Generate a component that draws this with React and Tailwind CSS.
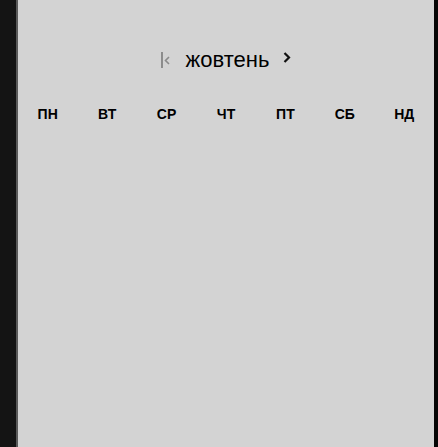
export default function App() {
  const days = ["ПН", "ВТ", "СР", "ЧТ", "ПТ", "СБ", "НД"];
  return (
    <div className="flex h-[447px] w-[438px] overflow-hidden bg-[#141414]" style={{ fontFamily: '"Liberation Sans", Arial, sans-serif' }}>
      <div className="w-[16px] shrink-0 bg-[#141414]" />
      <div className="w-[2px] shrink-0 bg-[#5a5a5a]" />
      <div className="flex flex-1 flex-col bg-[#d3d3d3]">
        <div className="mt-[47px] flex h-[26px] items-center justify-center">
          <div className="flex items-center">
            <svg width="12" height="18" viewBox="0 0 12 18" className="mr-[14px]">
              <line x1="2" y1="1" x2="2" y2="17" stroke="#7a7a7a" strokeWidth="1.6" />
              <polyline points="9,6 5.5,9.5 9,13" fill="none" stroke="#8a8a8a" strokeWidth="1.6" />
            </svg>
            <span className="text-[22px] leading-none text-black">жовтень</span>
            <svg width="10" height="14" viewBox="0 0 10 14" className="ml-[13px] -mt-[4px]">
              <polyline points="2.5,2 7,6.5 2.5,11" fill="none" stroke="#111" strokeWidth="2.2" />
            </svg>
          </div>
        </div>
        <div className="mt-[34px] grid grid-cols-7">
          {days.map((d) => (
            <div key={d} className="text-center text-[14px] font-bold leading-none text-black">
              {d}
            </div>
          ))}
        </div>
      </div>
      <div className="w-[4px] shrink-0 bg-[#050505]" />
    </div>
  );
}
